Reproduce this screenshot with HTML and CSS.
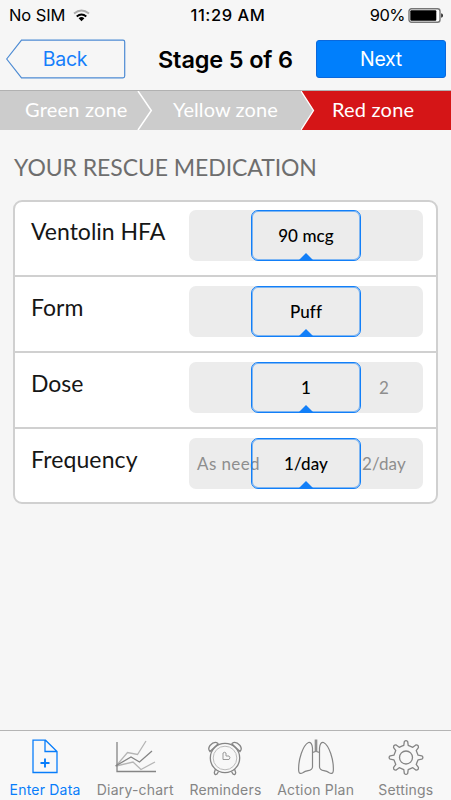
FILE: index.html
```html
<!DOCTYPE html>
<html lang="en">
<head>
<meta charset="utf-8">
<title>Stage 5 of 6</title>
<link rel="stylesheet" href="styles.css">
</head>
<body>
<div class="app">
  <div class="status">
    <span class="carrier">No SIM
      <svg class="wifi" width="17" height="13" viewBox="0 0 17 13" fill="none">
        <path d="M1 4.600Q8.500-1.600 16 4.600" stroke="#aaa" stroke-width="1.900"/>
        <path d="M3.700 7.400Q8.500 3.400 13.300 7.400" stroke="#000" stroke-width="1.900"/>
        <path d="M5.600 9.200Q8.500 6.900 11.400 9.200L8.500 12.300Z" fill="#000"/>
      </svg>
    </span>
    <span class="time">11:29 AM</span>
    <span class="power"><span class="percent">90%</span>
      <svg width="36" height="15" viewBox="0 0 36 15">
        <rect x="1" y=".8" width="31" height="13.400" rx="2.500" fill="#fff" stroke="#777" stroke-width="1.400"/>
        <rect x="2.300" y="2.200" width="26" height="10.600" rx="1" fill="#000"/>
        <path d="M33.200 5.300q1.800.3 1.800 2.200t-1.800 2.200z" fill="#222"/>
      </svg>
    </span>
  </div>
  <header class="nav">
    <a class="back"><svg class="back-shape" width="121" height="40" viewBox="0 0 121 40"><path d="M15.500 1.200H117Q118.700 1.200 118.700 3V37Q118.700 38.800 117 38.800H15.500L.7 20Z" fill="none" stroke="#4d8bd3" stroke-width="1.200"/></svg><span>Back</span></a>
    <h1>Stage 5 of 6</h1>
    <a class="next">Next</a>
  </header>
  <div class="steps">
    <span class="step step-green">Green zone</span>
    <svg width="16" height="39" viewBox="0 0 16 39"><path d="M1 0L14.300 19.500L1 39" fill="none" stroke="#fff" stroke-width="1.500"/></svg>
    <span class="step step-yellow">Yellow zone</span>
    <svg width="14" height="39" viewBox="0 0 14 39"><path d="M0 0H14V39H0L12.500 19.500Z" fill="#d51517"/><path d="M0 0L12.500 19.500L0 39" fill="none" stroke="#fff" stroke-width="1.300"/></svg>
    <span class="step step-red">Red zone</span>
  </div>
  <main>
    <h2>YOUR RESCUE MEDICATION</h2>
    <div class="card">
      <div class="row"><span class="label">Ventolin HFA</span><div class="picker"><span class="side"></span><span class="selected">90 mcg</span><span class="side"></span></div></div>
      <div class="row"><span class="label">Form</span><div class="picker"><span class="side"></span><span class="selected">Puff</span><span class="side"></span></div></div>
      <div class="row"><span class="label">Dose</span><div class="picker"><span class="side"></span><span class="selected">1</span><span class="side two">2</span></div></div>
      <div class="row"><span class="label wide">Frequency</span><div class="picker"><span class="side need">As need</span><span class="selected">1/day</span><span class="side twoday">2/day</span></div></div>
    </div>
  </main>
  <nav class="tabs">
    <a class="tab active">
      <svg width="44" height="40" viewBox="0 0 44 40" fill="none" stroke="currentColor" stroke-width="1.300"><path d="M10 3.200H22.500L34 14.500V35.500H10ZM22 3.200V14.500H34"/><path d="M22 21.500V30.500M17.500 26H26.500" stroke-width="1.900"/></svg>
      <span>Enter Data</span></a>
    <a class="tab">
      <svg width="44" height="40" viewBox="0 0 44 40" fill="none" stroke="currentColor" stroke-width="1.300"><g stroke="#b5b5b5"><path d="M3 29L14.500 15.500L24.500 17.500L33 4"/><path d="M3 29L20 25L28 32.500L42 25"/></g><path d="M4 5V34.500H43"/><path d="M2.500 29L18 20L26.500 25L39 14"/></svg>
      <span>Diary-chart</span></a>
    <a class="tab">
      <svg width="44" height="40" viewBox="0 0 44 40" fill="none" stroke="currentColor" stroke-width="1.300"><circle cx="22" cy="21" r="14.700"/><circle cx="22" cy="21" r="11.800" stroke="#bbb" stroke-width="1"/><path d="M15 6.500Q11.500 3.500 7 8.500Q4.500 12 7 14.500L15 7ZM29 6.500Q32.500 3.500 37 8.500Q39.500 12 37 14.500L29 7Z"/><path d="M12.500 32L11.300 35.500Q11.500 38.500 14 37L15.500 34.500M31.500 32L32.700 35.500Q32.500 38.500 30 37L28.500 34.500"/><path d="M20 16Q21.500 14.500 23 16V19H26Q28 20.700 26 22.500H20Z" stroke="#999" stroke-width="1"/></svg>
      <span>Reminders</span></a>
    <a class="tab">
      <svg width="44" height="40" viewBox="0 0 44 40" fill="none" stroke="currentColor" stroke-width="1.200"><path d="M21.300 2.500V14.500L18.500 15.500M22.700 2.500V14.500L25.500 15.500"/><path d="M18.500 30V11Q18 5 14.500 5.500C9 8 4 23 4.700 34Q5.200 38 9.200 35.500C13 32.500 18 35 18.500 30ZM25.500 30V11Q26 5 29.500 5.500C35 8 40 23 39.300 34Q38.800 38 34.800 35.500C31 32.500 26 35 25.500 30Z"/></svg>
      <span>Action Plan</span></a>
    <a class="tab">
      <svg width="44" height="40" viewBox="0 0 44 40" fill="none" stroke="currentColor" stroke-width="1.300" stroke-linejoin="round"><circle cx="22" cy="20.500" r="6.500"/><path d="M17.800 9.200L19.800 8.400L20.300 4.700Q22 2.500 23.700 4.700L24.200 8.400L28.800 10.300L31.800 8Q34.700 7.700 34.400 10.600L32.200 13.600L34.100 18.200L37.800 18.800Q40 20.500 37.800 22.200L34.100 22.800L32.200 27.400L34.400 30.400Q34.700 33.300 31.800 33L28.800 30.700L24.200 32.600L23.700 36.300Q22 38.500 20.300 36.300L19.800 32.600L15.200 30.700L12.200 33Q9.300 33.300 9.600 30.400L11.800 27.400L9.900 22.800L6.200 22.200Q4 20.500 6.200 18.800L9.900 18.200L11.800 13.600L9.600 10.600Q9.300 7.700 12.200 8L15.200 10.300Z"/></svg>
      <span>Settings</span></a>
  </nav>
</div>
</body>
</html>
```
FILE: styles.css
```css
* { box-sizing: border-box; }
body { margin: 0; font-family: Inter, sans-serif; color: #000; }
.app { width: 451px; height: 800px; background: #f6f6f6; display: flex; flex-direction: column; overflow: hidden; }
.status { height: 30px; flex: none; display: grid; grid-template-columns: 1fr auto 1fr; align-items: center; padding: 0 7px 0 9px; font-size: 16.500px; white-space: nowrap; }
.carrier, .power { display: flex; align-items: center; }
.carrier { gap: 8px; letter-spacing: -.1px; }
.time { font-weight: 500; letter-spacing: .55px; padding-left: 3px; }
.power { justify-content: flex-end; gap: 3px; }
.percent { letter-spacing: -.5px; }
.nav { height: 60px; flex: none; display: grid; grid-template-columns: 151px 1fr 136px; align-items: center; padding: 0 0 3px 0; }
.back { height: 40px; margin-left: 6px; width: 121px; display: grid; align-items: center; color: #157efb; font-size: 19.500px; letter-spacing: -.3px; }
.back > * { grid-area: 1 / 1; }
.back span { text-align: center; padding-right: 3px; }
h1 { margin: 0 15px 0 0; padding-top: 1px; display: flex; justify-content: center; font-size: 23.500px; font-weight: 600; letter-spacing: -.15px; white-space: nowrap; }
.next { display: flex; align-items: center; justify-content: center; width: 130px; height: 38px; border: 1px solid #0a68dc; border-radius: 3px; background: #007ffc; color: #fff; font-size: 19.500px; letter-spacing: -.3px; margin-left: 1px; }
.steps { height: 40px; flex: none; display: flex; background: #ccc; border-top: 1px solid #b1b1b1; color: #fff; font-family: Lato, sans-serif; font-size: 20px; letter-spacing: .2px; line-height: 37px; white-space: nowrap; }
.step-green { width: 137px; padding-left: 25px; }
.step-yellow { width: 148px; padding-left: 20px; letter-spacing: .1px; }
.step-red { flex: 1; padding-left: 17px; background: #d51517; }
main { flex: 1; padding: 22px 13px 0; font-family: Lato, sans-serif; }
h2 { margin: 0 0 18px 1px; height: 30px; line-height: 30px; color: #6e6e6e; font-size: 23px; font-weight: 400; letter-spacing: -.08px; white-space: nowrap; }
.card { width: 425px; height: 304px; background: #fff; border: 2px solid #d0d0d0; border-radius: 9px; display: grid; grid-template-rows: 75px 76px 76px 73px; overflow: hidden; }
.row { display: flex; justify-content: space-between; padding: 9px 13px 0 16px; border-bottom: 2px solid #d0d0d0; }
.row:first-child { padding-top: 8px; }
.row:last-child { border-bottom: 0; }
.label { font-size: 23px; line-height: 43px; color: #161616; white-space: nowrap; }
.wide { letter-spacing: .12px; }
.picker { width: 234px; height: 51px; border-radius: 7px; background: #ececec; display: grid; grid-template-columns: 62px 110px 62px; font-size: 17px; letter-spacing: .1px; line-height: 51px; color: #8e8e8e; white-space: nowrap; }
.need { padding-left: 8px; letter-spacing: .4px; }
.selected { position: relative; border: 1px solid #127ff8; border-radius: 7px; box-shadow: inset 0 0 0 1px rgba(18, 127, 248, .5); color: #000; text-align: center; line-height: 49px; font-weight: 500; }
.selected::after { content: ""; position: absolute; left: 47px; bottom: 0; border: 7px solid transparent; border-top: 0; border-bottom-color: #127ff8; }
.two { padding-left: 18px; }
.twoday { padding-left: 1px; }
.tabs { height: 70px; flex: none; border-top: 1px solid #b5b5b5; background: #f8f8f8; display: grid; grid-template-columns: repeat(5, 90.2px); padding-top: 6px; color: #858585; }
.tab { display: flex; flex-direction: column; align-items: center; font-size: 14px; letter-spacing: .2px; line-height: 25px; white-space: nowrap; }
.tab svg { flex: none; }
.active { color: #087dfa; }
```
